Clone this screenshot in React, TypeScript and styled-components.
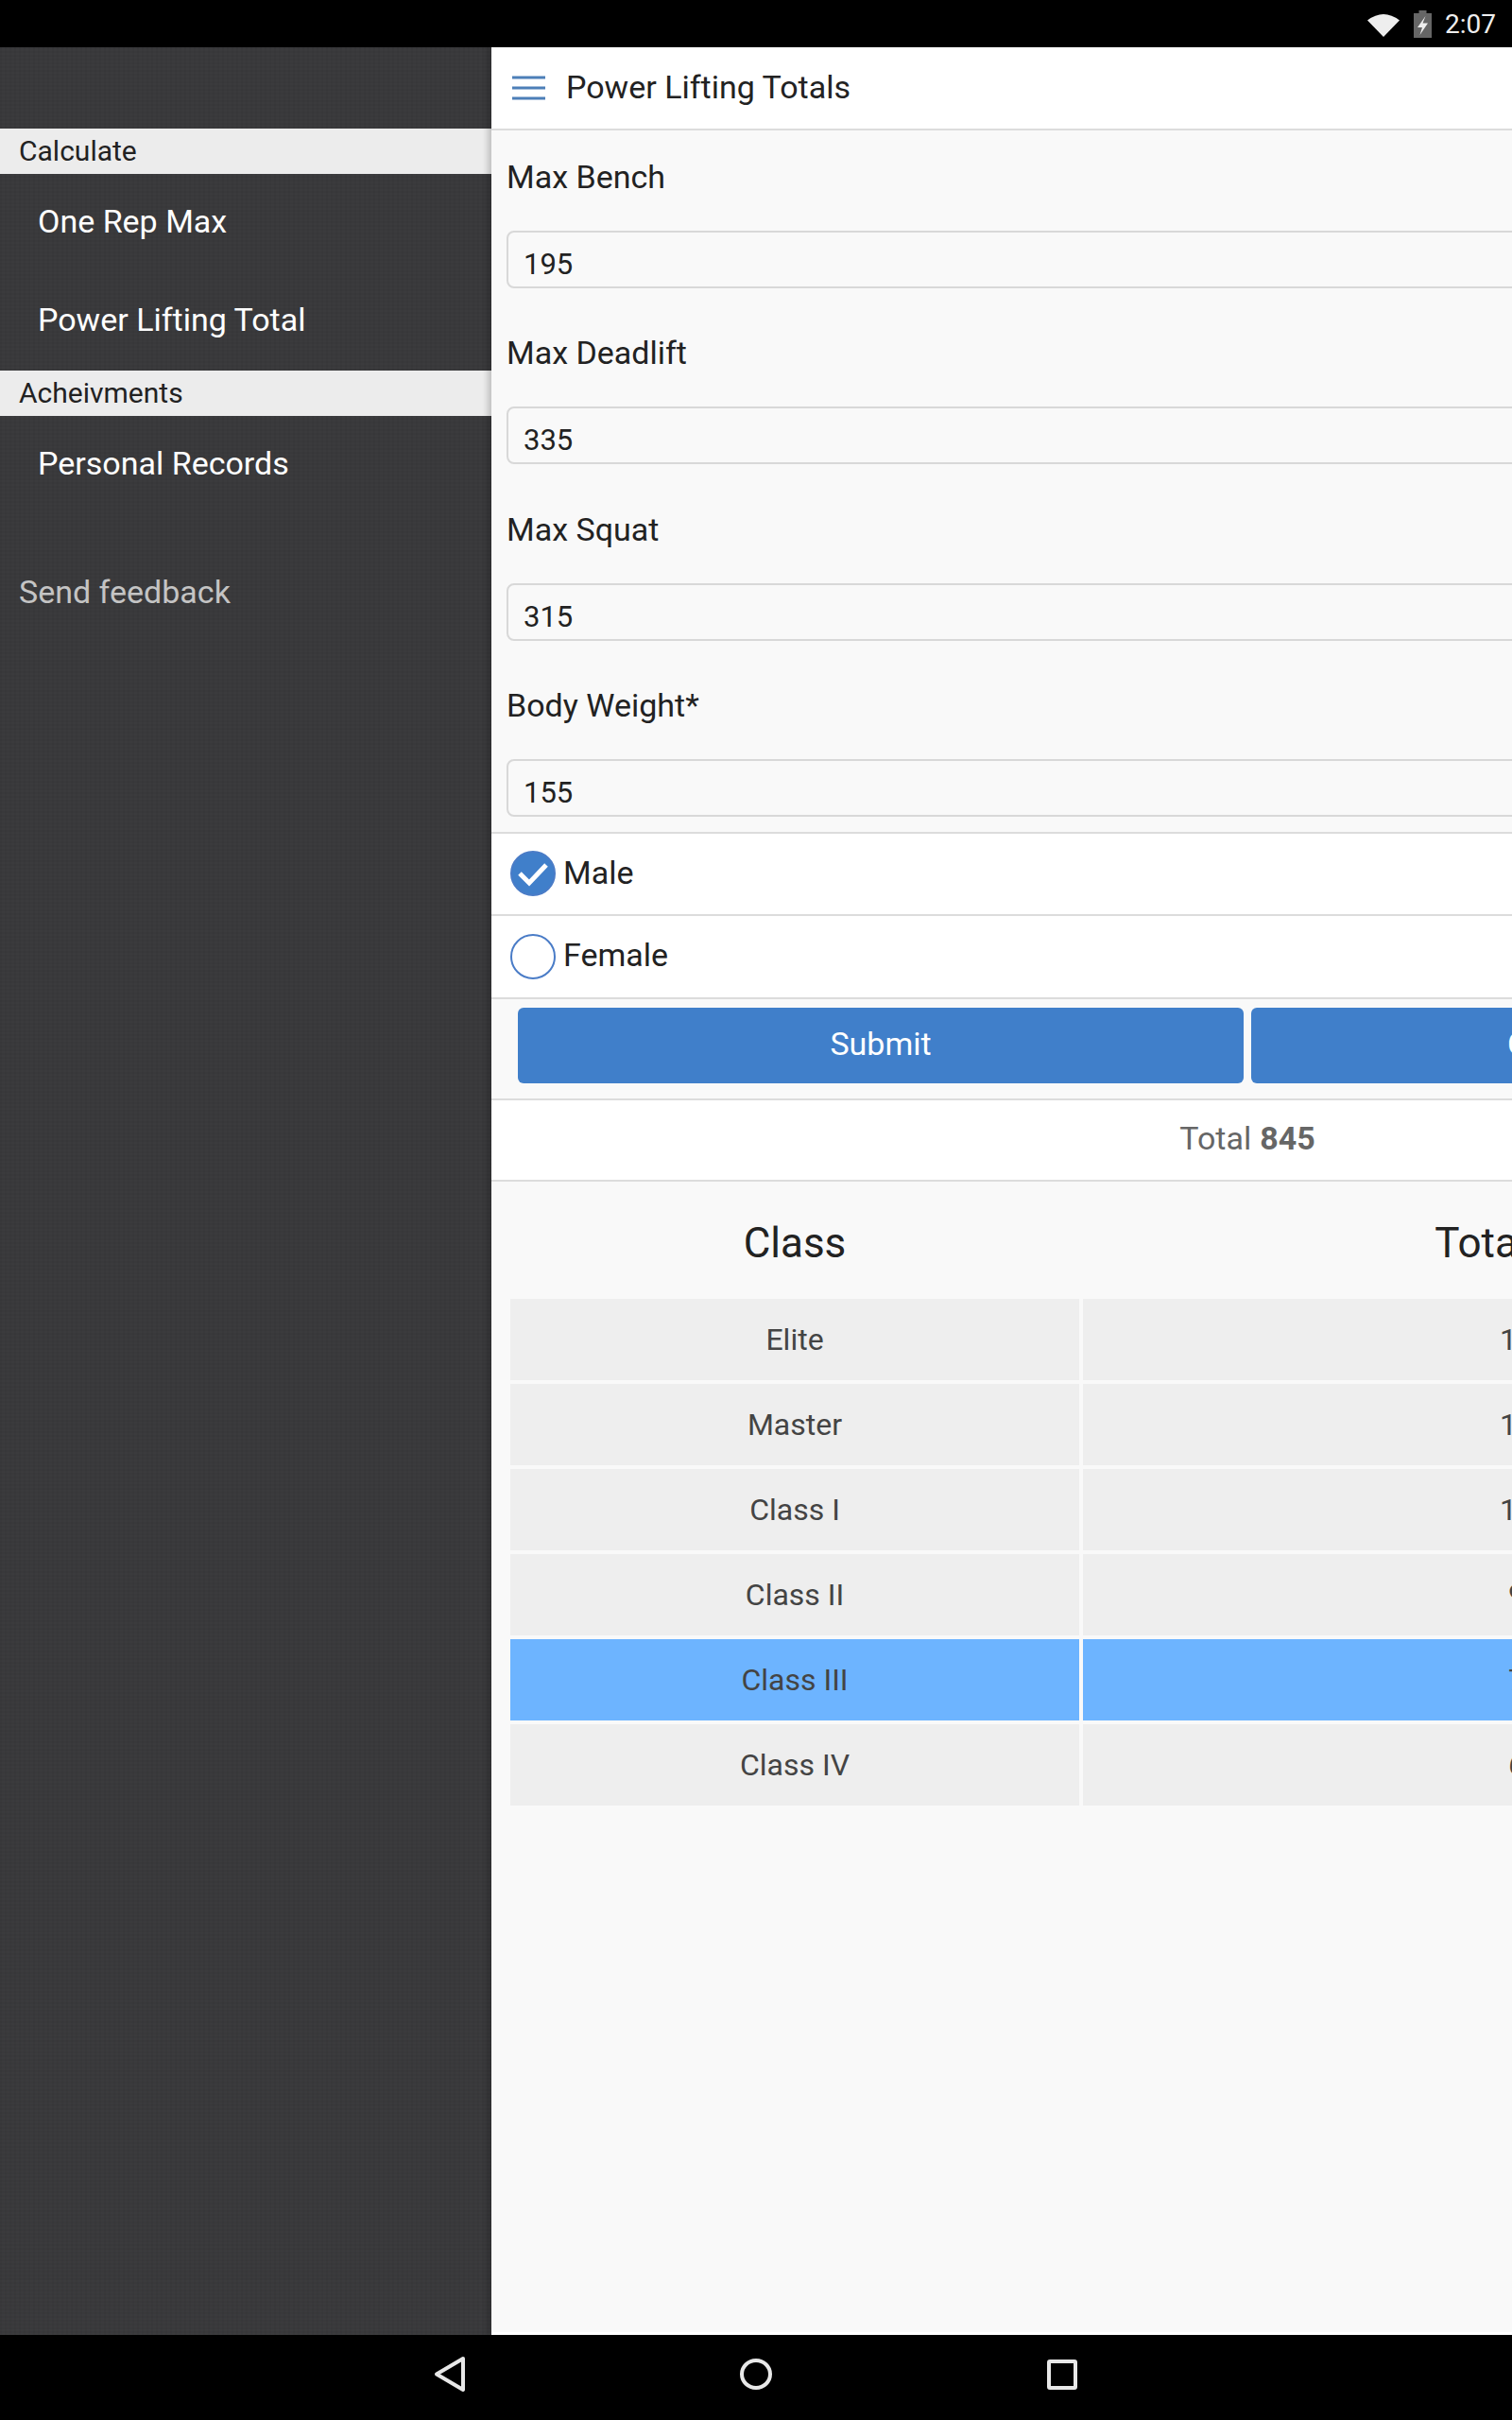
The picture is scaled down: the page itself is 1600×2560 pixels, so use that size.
import React from "react";
import styled, { createGlobalStyle } from "styled-components";

const Global = createGlobalStyle`
  html, body { margin: 0; padding: 0; background: #000; }
  body { font-family: Roboto, "Liberation Sans", sans-serif; }
  * { box-sizing: border-box; }
`;

const Screen = styled.div`
  width: 1600px;
  height: 2560px;
  display: flex;
  flex-direction: column;
  overflow: hidden;
  background: #000;
`;

const StatusBar = styled.div`
  height: 50px;
  flex: none;
  background: #000;
  display: flex;
  align-items: center;
  justify-content: flex-end;
  padding: 0 17px 0 0;
  color: #eee;
  font-size: 28px;
`;

const BatteryIcon = styled.svg`
  margin-left: 15px;
`;

const Clock = styled.span`
  margin-left: 14px;
`;

const Body = styled.div`
  flex: 1;
  display: flex;
  min-height: 0;
  overflow: hidden;
`;

const Sidebar = styled.aside`
  width: 520px;
  flex: none;
  padding-top: 86px;
  background-color: #39393b;
  background-image:
    repeating-linear-gradient(0deg, rgba(255, 255, 255, 0.012) 0 2px, transparent 2px 4px),
    repeating-linear-gradient(90deg, rgba(0, 0, 0, 0.04) 0 2px, transparent 2px 5px);
`;

const SectionLabel = styled.div`
  height: 48px;
  background: #ececec;
  color: #222;
  font-size: 30px;
  line-height: 48px;
  padding-left: 20px;
`;

const NavItem = styled.div`
  height: 104px;
  display: flex;
  align-items: center;
  padding: 0 0 4px 40px;
  color: #fff;
  font-size: 34px;
`;

const Feedback = styled.div`
  margin-top: 58px;
  padding-left: 20px;
  color: #c4c4c4;
  font-size: 34px;
  line-height: 48px;
`;

const Main = styled.main`
  width: 1600px;
  flex: none;
  background: #f9f9f9;
  border-bottom: 3px solid #fff;
  box-shadow: -4px 0 6px rgba(0, 0, 0, 0.18);
`;

const Header = styled.header`
  height: 88px;
  background: #fff;
  border-bottom: 2px solid #dcdcdc;
  display: flex;
  align-items: center;
  padding: 0 0 0 22px;
  gap: 22px;
  color: #222;
  font-size: 34px;
  line-height: 46px;
`;

const HeaderTitle = styled.span`
  margin-top: -2px;
`;

const Fields = styled.div`
  display: flex;
  flex-direction: column;
  gap: 19.33px;
  padding: 0 0 16px 16px;
`;

const FieldLabel = styled.div`
  height: 106px;
  padding-top: 25px;
  font-size: 34px;
  line-height: 48px;
  color: #222;
`;

const InputBox = styled.div`
  height: 61px;
  border: 2px solid #d8d8d8;
  border-radius: 8px;
  padding: 10px 16px 0;
  display: flex;
  align-items: center;
  font-size: 31px;
  color: #222;
`;

const RadioRow = styled.div`
  height: 87.5px;
  background: #fff;
  border-top: 2px solid #dcdcdc;
  display: flex;
  align-items: center;
  padding-left: 20px;
  gap: 8px;
  font-size: 34px;
  color: #222;
`;

const RadioLabel = styled.span`
  margin-top: -4px;
`;

const Circle = styled.span<{ $on?: boolean }>`
  width: 48px;
  height: 48px;
  margin-top: -1px;
  border-radius: 50%;
  flex: none;
  border: 2px solid #4a7cc7;
  background: ${(p) => (p.$on ? "#407fca" : "#fff")};
  display: flex;
  align-items: center;
  justify-content: center;
`;

const Buttons = styled.div`
  height: 107px;
  border-top: 2px solid #dcdcdc;
  display: flex;
  gap: 8px;
  padding: 9px 28px 0;
`;

const Btn = styled.div`
  flex: 1;
  height: 80px;
  padding-bottom: 3px;
  background: #407fca;
  border-radius: 6px;
  color: #fff;
  font-size: 34px;
  display: flex;
  align-items: center;
  justify-content: center;
`;

const TotalRow = styled.div`
  height: 88px;
  padding-bottom: 3px;
  background: #fff;
  border-top: 2px solid #dcdcdc;
  border-bottom: 2px solid #dcdcdc;
  display: flex;
  align-items: center;
  justify-content: center;
  font-size: 34px;
  color: #666;
  b { font-weight: 700; margin-left: 9px; }
`;

const Table = styled.div`
  margin: 0 20px;
  display: grid;
  grid-template-columns: 602px 954px;
  column-gap: 4px;
`;

const HeadCell = styled.div`
  height: 124px;
  padding-top: 6px;
  display: flex;
  align-items: center;
  justify-content: center;
  font-size: 44px;
  color: #222;
`;

const Cell = styled.div<{ $hot?: boolean }>`
  height: 86px;
  margin-bottom: 4px;
  background: ${(p) => (p.$hot ? "#6db4ff" : "#eeeeee")};
  display: flex;
  align-items: center;
  justify-content: center;
  font-size: 32px;
  color: #444;
`;

const NavBar = styled.div`
  height: 90px;
  flex: none;
  background: #000;
  position: relative;
`;

const NavIcon = styled.svg<{ $x: number }>`
  position: absolute;
  left: ${(p) => p.$x}px;
  top: 20px;
`;

const rows: [string, string, boolean?][] = [
  ["Elite", "1300"],
  ["Master", "1150"],
  ["Class I", "1000"],
  ["Class II", "900"],
  ["Class III", "765", true],
  ["Class IV", "650"],
];

const fields: [string, string][] = [
  ["Max Bench", "195"],
  ["Max Deadlift", "335"],
  ["Max Squat", "315"],
  ["Body Weight*", "155"],
];

export default function App() {
  return (
    <Screen>
      <Global />
      <StatusBar>
        <svg width="34" height="27" viewBox="0 0 34 27">
          <path d="M0 9.5Q17 -3.5 34 9.5L17 27Z" fill="#eee" />
        </svg>
        <BatteryIcon width="19" height="29" viewBox="0 0 19 29">
          <path d="M5.5 0h8v3H19v26H0V3h5.5z" fill="#666" />
          <path d="M12.5 6 4 18h5l-2.5 8L15 13.500h-5.500z" fill="#eee" />
        </BatteryIcon>
        <Clock>2:07</Clock>
      </StatusBar>
      <Body>
        <Sidebar>
          <SectionLabel>Calculate</SectionLabel>
          <NavItem>One Rep Max</NavItem>
          <NavItem>Power Lifting Total</NavItem>
          <SectionLabel>Acheivments</SectionLabel>
          <NavItem>Personal Records</NavItem>
          <Feedback>Send feedback</Feedback>
        </Sidebar>
        <Main>
          <Header>
            <svg width="35" height="26" viewBox="0 0 35 26">
              <path d="M0 2h35M0 13h35M0 24h35" stroke="#4d7fb8" strokeWidth="3" />
            </svg>
            <HeaderTitle>Power Lifting Totals</HeaderTitle>
          </Header>
          <Fields>
            {fields.map(([l, v]) => (
              <div key={l}>
                <FieldLabel>{l}</FieldLabel>
                <InputBox>{v}</InputBox>
              </div>
            ))}
          </Fields>
          <RadioRow>
            <Circle $on>
              <svg width="44" height="44" viewBox="0 0 44 44">
                <path d="M8 22l10 10L36 13" stroke="#fff" strokeWidth="5" fill="none" />
              </svg>
            </Circle>
            <RadioLabel>Male</RadioLabel>
          </RadioRow>
          <RadioRow>
            <Circle />
            <RadioLabel>Female</RadioLabel>
          </RadioRow>
          <Buttons>
            <Btn>Submit</Btn>
            <Btn>Clear Numbers</Btn>
          </Buttons>
          <TotalRow>
            Total <b>845</b>
          </TotalRow>
          <Table>
            <HeadCell>Class</HeadCell>
            <HeadCell>Total (lbs.)</HeadCell>
            {rows.map(([c, t, h]) => (
              <React.Fragment key={c}>
                <Cell $hot={h}>{c}</Cell>
                <Cell $hot={h}>{t}</Cell>
              </React.Fragment>
            ))}
          </Table>
        </Main>
      </Body>
      <NavBar>
        <NavIcon $x={456} width="40" height="44" viewBox="0 0 40 44">
          <path d="M34 5 6 21.500l28 16.500z" fill="none" stroke="#e8e8e8" strokeWidth="4" strokeLinejoin="round" />
        </NavIcon>
        <NavIcon $x={780} width="40" height="44" viewBox="0 0 40 44">
          <ellipse cx="20" cy="21.500" rx="15" ry="14.500" fill="none" stroke="#e8e8e8" strokeWidth="4" />
        </NavIcon>
        <NavIcon $x={1103} width="40" height="44" viewBox="0 0 40 44">
          <rect x="7" y="8" width="28" height="28" rx="1" fill="none" stroke="#e8e8e8" strokeWidth="4" />
        </NavIcon>
      </NavBar>
    </Screen>
  );
}
